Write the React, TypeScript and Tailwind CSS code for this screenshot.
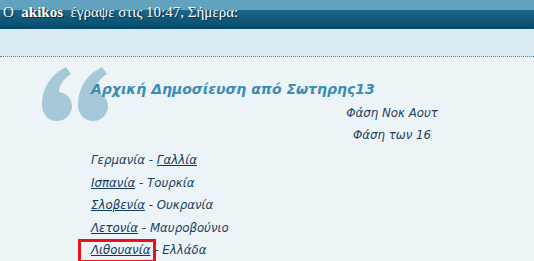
import React from "react";

const rows: { left: string; leftLink: boolean; right: string; rightLink: boolean }[] = [
  { left: "Γερμανία", leftLink: false, right: "Γαλλία", rightLink: true },
  { left: "Ισπανία", leftLink: true, right: "Τουρκία", rightLink: false },
  { left: "Σλοβενία", leftLink: true, right: "Ουκρανία", rightLink: false },
  { left: "Λετονία", leftLink: true, right: "Μαυροβούνιο", rightLink: false },
];

function QuoteMark() {
  const mark = "M24 0 L29 7 C21 12 17 19 17 25 C25 26 30 32 30 39 C30 47 24 54 15 54 C6 54 0 47 0 38 C0 20 10 7 24 0 Z";
  return (
    <svg width="66" height="55" viewBox="0 0 66 55" className="shrink-0">
      <path d={mark} fill="#a5c9d8" />
      <path d={mark} fill="#a5c9d8" transform="translate(36 0)" />
    </svg>
  );
}

export default function App() {
  return (
    <div className="w-[534px] h-[261px] overflow-hidden bg-[#ecf4f8]">
      {/* header bar */}
      <div className="relative h-[29px] bg-gradient-to-b from-[#29789a] to-[#03496a]">
        <div className="absolute inset-x-0 top-0 h-[10px] bg-[#61a3be]" />
        <div
          className="relative flex items-center h-[24px] pl-[3px] text-[15px] text-white whitespace-pre [text-shadow:1px_1px_1px_#05324a]"
          style={{ fontFamily: '"Liberation Serif", serif' }}
        >
          <span>Ο  </span>
          <span className="font-bold">akikos</span>
          <span>  έγραψε στις 10:47, Σήμερα:</span>
        </div>
      </div>
      <div className="h-[28px] bg-[#d9e9f0] border-b border-dotted border-[#4f8aa5]" />

      {/* quote body */}
      <div className="pl-[42px] pt-[10px]" style={{ fontFamily: '"DejaVu Sans", sans-serif' }}>
        <div className="flex items-start">
          <QuoteMark />
          <div className="-ml-[17px] pt-[12px] text-[14px] font-bold italic text-[#3b8cb4]">
            Αρχική Δημοσίευση από Σωτηρης13
          </div>
        </div>
        <div className="-mt-[20px] pl-[49px] italic text-[11.8px] text-[#1d3f5c]">
          <div className="w-[602px] text-center leading-[22px]">
            <div>Φάση Νοκ Αουτ</div>
            <div>Φάση των 16</div>
          </div>
          <div className="mt-[3px] leading-[22.5px]">
            {rows.map((r) => (
              <div key={r.left}>
                <span className={r.leftLink ? "underline text-[#0f3a63]" : ""}>{r.left}</span>
                <span> - </span>
                <span className={r.rightLink ? "underline text-[#0f3a63]" : ""}>{r.right}</span>
              </div>
            ))}
            <div className="relative">
              <span className="relative underline text-[#0f3a63]">
                Λιθουανία
                <span className="absolute -left-[13px] -right-[6px] -top-[4px] h-[24px] border-[3px] border-[#e8101a]" />
              </span>
              <span> - Ελλάδα</span>
            </div>
          </div>
        </div>
      </div>
    </div>
  );
}
